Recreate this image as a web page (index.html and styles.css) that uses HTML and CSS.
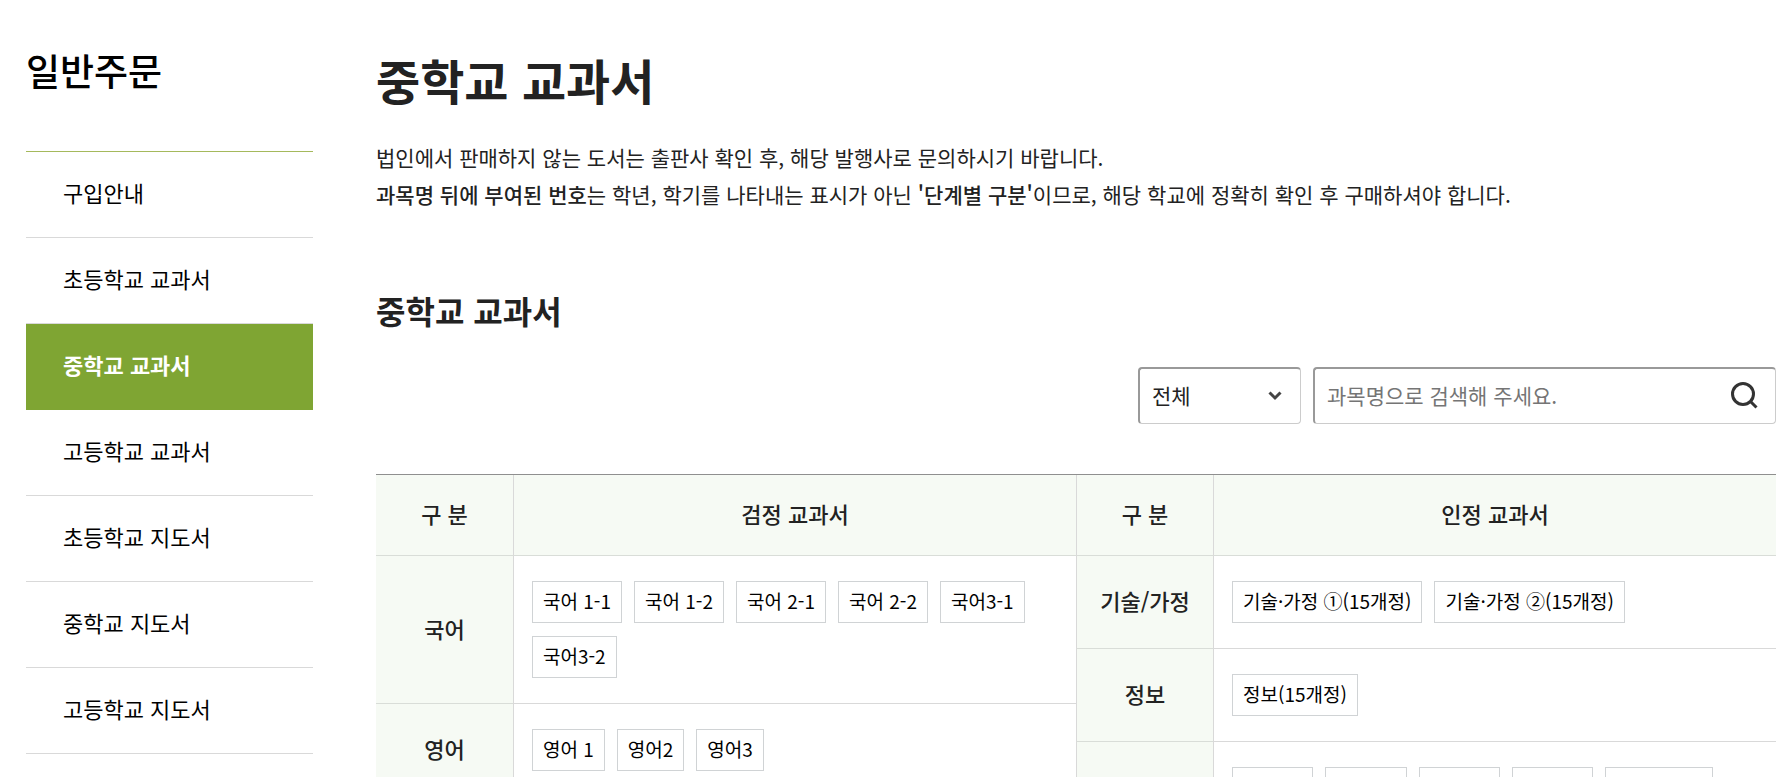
FILE: index.html
```html
<!DOCTYPE html>
<html lang="ko">
<head>
    <meta charset="UTF-8">
    <meta name="viewport" content="width=device-width, initial-scale=1.0">
    <title>중학교 교과서 - 일반주문</title>
    <link rel="stylesheet" href="styles.css">
</head>
<body>
    <div class="container">
        <aside class="sidebar">
            <h2 class="sidebar-title">일반주문</h2>
            <nav>
                <ul class="menu">
                    <li><a href="#">구입안내</a></li>
                    <li><a href="#">초등학교 교과서</a></li>
                    <li class="active"><a href="#">중학교 교과서</a></li>
                    <li><a href="#">고등학교 교과서</a></li>
                    <li><a href="#">초등학교 지도서</a></li>
                    <li><a href="#">중학교 지도서</a></li>
                    <li><a href="#">고등학교 지도서</a></li>
                </ul>
            </nav>
        </aside>

        <main class="content">
            <h1>중학교 교과서</h1>
            <p class="guide">
                법인에서 판매하지 않는 도서는 출판사 확인 후, 해당 발행사로 문의하시기 바랍니다.<br>
                <strong>과목명 뒤에 부여된 번호</strong>는 학년, 학기를 나타내는 표시가 아닌 <strong>'단계별 구분'</strong>이므로, 해당 학교에 정확히 확인 후 구매하셔야 합니다.
            </p>

            <h2 class="section-title">중학교 교과서</h2>

            <form class="search" onsubmit="return false">
                <div class="select-box">
                    <select aria-label="교과서 구분">
                        <option>전체</option>
                        <option>검정 교과서</option>
                        <option>인정 교과서</option>
                    </select>
                    <svg class="arrow" width="14" height="10" viewBox="0 0 14 10" fill="none" stroke="#444" stroke-width="3">
                        <path d="M1.5 1.5 7 7l5.5-5.5"/>
                    </svg>
                </div>
                <div class="search-box">
                    <input type="text" aria-label="과목명 검색" placeholder="과목명으로 검색해 주세요.">
                    <button type="submit" aria-label="검색">
                        <svg width="28" height="28" viewBox="0 0 28 28" fill="none" stroke="#333" stroke-width="3">
                            <circle cx="13" cy="13" r="10.5"/>
                            <path d="M20 20l6.5 6.5"/>
                        </svg>
                    </button>
                </div>
            </form>

            <div class="tables">
                <table>
                    <thead>
                        <tr><th class="subject" scope="col">구 분</th><th scope="col">검정 교과서</th></tr>
                    </thead>
                    <tbody>
                        <tr>
                            <th scope="row">국어</th>
                            <td>
                                <div class="books">
                                    <a href="#">국어 1-1</a>
                                    <a href="#">국어 1-2</a>
                                    <a href="#">국어 2-1</a>
                                    <a href="#">국어 2-2</a>
                                    <a href="#">국어3-1</a>
                                    <a href="#">국어3-2</a>
                                </div>
                            </td>
                        </tr>
                        <tr>
                            <th scope="row">영어</th>
                            <td>
                                <div class="books">
                                    <a href="#">영어 1</a>
                                    <a href="#">영어2</a>
                                    <a href="#">영어3</a>
                                </div>
                            </td>
                        </tr>
                    </tbody>
                </table>

                <table>
                    <thead>
                        <tr><th class="subject" scope="col">구 분</th><th scope="col">인정 교과서</th></tr>
                    </thead>
                    <tbody>
                        <tr>
                            <th scope="row">기술/가정</th>
                            <td>
                                <div class="books">
                                    <a href="#">기술·가정 ①(15개정)</a>
                                    <a href="#">기술·가정 ②(15개정)</a>
                                </div>
                            </td>
                        </tr>
                        <tr>
                            <th scope="row">정보</th>
                            <td>
                                <div class="books">
                                    <a href="#">정보(15개정)</a>
                                </div>
                            </td>
                        </tr>
                        <tr>
                            <th scope="row">예체능</th>
                            <td>
                                <div class="books">
                                    <a href="#">음악 ①</a>
                                    <a href="#">음악 ②</a>
                                    <a href="#">미술 ①</a>
                                    <a href="#">미술 ②</a>
                                    <a href="#">체육활동 1</a>
                                </div>
                            </td>
                        </tr>
                    </tbody>
                </table>
            </div>
        </main>
    </div>
</body>
</html>
```
FILE: styles.css
```css
* {
    margin: 0;
    padding: 0;
    box-sizing: border-box;
}

body {
    font-family: 'Noto Sans CJK KR', sans-serif;
    font-size: 22px;
    color: #222;
    background: #fff;
}

a {
    color: #000;
    text-decoration: none;
}

.container {
    display: flex;
    gap: 63px;
    padding: 44px 15px 0 26px;
}

/* sidebar */
.sidebar {
    flex: 0 0 287px;
}

.sidebar-title {
    margin-bottom: 55px;
    font-size: 37px;
    font-weight: 500;
    line-height: 52px;
    color: #000;
}

.menu {
    list-style: none;
    border-top: 1px solid #a5b95c;
}

.menu li {
    border-bottom: 1px solid #d9d9d9;
}

.menu a {
    display: block;
    padding: 0 37px 4px;
    line-height: 81px;
}

.menu .active {
    background: #7fa533;
    border-bottom-color: #7fa533;
}

.menu .active a {
    color: #fff;
    font-weight: 700;
}

/* content */
.content {
    flex: 1;
    min-width: 0;
}

h1 {
    font-size: 48px;
    font-weight: 700;
    line-height: 70px;
}

.guide {
    margin-top: 25px;
    font-size: 21px;
    line-height: 37px;
}

.guide strong {
    font-weight: 500;
}

.section-title {
    margin-top: 75px;
    font-size: 32px;
    font-weight: 700;
    line-height: 44px;
}

.search {
    display: flex;
    justify-content: flex-end;
    gap: 12px;
    margin-top: 35px;
}

.select-box,
.search-box {
    position: relative;
    height: 57px;
}

.select-box {
    width: 163px;
}

.search-box {
    width: 463px;
}

.search select,
.search input {
    width: 100%;
    height: 100%;
    padding: 0 12px 2px;
    border: 1px solid #ccc;
    border-top: 2px solid #999;
    border-left: 2px solid #999;
    border-radius: 4px;
    background: #fff;
    font-family: inherit;
    font-size: 21px;
    color: #222;
    appearance: none;
}

.search input::placeholder {
    color: #757575;
}

.arrow {
    position: absolute;
    top: 24px;
    right: 19px;
    pointer-events: none;
}

.search-box button {
    position: absolute;
    top: 14px;
    right: 18px;
    width: 28px;
    height: 28px;
    border: none;
    background: none;
    cursor: pointer;
}

.search-box svg {
    display: block;
}

/* textbook tables */
.tables {
    display: grid;
    grid-template-columns: 1fr 1fr;
    align-items: start;
    margin-top: 50px;
    border-top: 1px solid #8f8f8f;
}

table {
    width: 100%;
    border-collapse: separate;
    border-spacing: 0;
    table-layout: fixed;
}

th {
    padding-bottom: 4px;
    border-bottom: 1px solid #d9ddd8;
    background: #f6faf4;
    font-weight: 500;
}

th + th,
td,
table + table th {
    border-left: 1px solid #d9d9d9;
}

thead th {
    height: 81px;
}

.subject {
    width: 137px;
}

td {
    padding: 25px 18px;
    border-bottom: 1px solid #d9d9d9;
}

.books {
    display: flex;
    flex-wrap: wrap;
    gap: 13px 12px;
}

.books a {
    padding: 0 10px 2px;
    border: 1px solid #d0d3d5;
    font-size: 19px;
    line-height: 38px;
}
```
